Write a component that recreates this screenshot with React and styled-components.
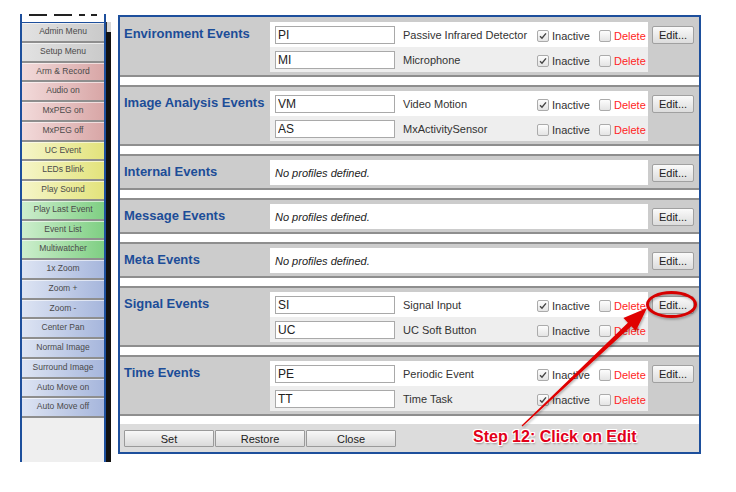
import React from 'react'
import styled, { createGlobalStyle } from 'styled-components'

const GlobalStyle = createGlobalStyle`
  html, body {
    margin: 0;
    padding: 0;
    background: #fff;
  }
  body {
    width: 736px;
    height: 492px;
    overflow: hidden;
    font-family: "Liberation Sans", Arial, sans-serif;
  }
`;

const BLUE = '#1d4f9c';

const Page = styled.div`
  position: relative;
  display: flex;
  align-items: flex-start;
  width: 736px;
  height: 492px;
  padding-left: 20px;
  box-sizing: border-box;
`;

const LeftPanel = styled.div`
  display: flex;
  flex-direction: column;
  margin-top: 14px;
  width: 86px;
  height: 448px;
  box-sizing: border-box;
  border-left: 2px solid ${BLUE};
  border-right: 2px solid ${BLUE};
  background: #efefef;
`;

const TopStrip = styled.div`
  display: flex;
  align-items: flex-start;
  gap: 7px;
  height: 8px;
  padding-left: 7px;
  background: #fff;
  border-bottom: 1px solid ${BLUE};
`;

const StripMark = styled.span`
  width: 18px;
  height: 0;
  border-top: 2px ${p => (p.$dashed ? 'dashed' : 'solid')} #222;
`;

const tones = {
  gray: ['#e2e2e2', '#cacaca'],
  pink: ['#f2dada', '#d8a6a6'],
  yellow: ['#f5f5c8', '#e3e37c'],
  green: ['#cdeecd', '#7fcf83'],
  blue: ['#dde4f3', '#a6b6dc'],
};

const MenuButton = styled.div`
  height: 17.75px;
  line-height: 17.75px;
  border-bottom: 2px solid #8e8e8e;
  background: linear-gradient(to right, ${p => tones[p.$tone][0]}, ${p => tones[p.$tone][1]});
  box-shadow: inset 0 1px 0 rgba(255, 255, 255, 0.6);
  text-align: center;
  font-size: 8.5px;
  color: #4a4a4a;
  white-space: nowrap;
`;

const Splitter = styled.div`
  display: flex;
  flex-direction: column;
  margin-top: 22px;
  width: 5px;
  height: 440px;
  background: #111;
`;

const SplitterCap = styled.div`
  height: 10px;
  background: #d8d8d8;
  border-left: 1px solid #333;
`;

const MainPanel = styled.div`
  margin-top: 15px;
  margin-left: 7px;
  width: 583px;
  box-sizing: border-box;
  border: 2px solid ${BLUE};
  background: #fff;
`;

const Section = styled.div`
  display: flex;
  align-items: flex-start;
  background: #cccccc;
  border-top: 2px solid #8e8e8e;
  border-bottom: 2px solid #8e8e8e;
  padding: 4px 0 3px;
  margin-bottom: 8px;

  &:first-child {
    border-top: none;
    padding-top: 5px;
  }
`;

const Title = styled.div`
  width: 150px;
  box-sizing: border-box;
  padding-left: 4px;
  line-height: 23px;
  font-size: 13px;
  font-weight: bold;
  color: #1c4d98;
  white-space: nowrap;
`;

const Rows = styled.div`
  display: flex;
  flex-direction: column;
  width: 378px;
`;

const Row = styled.div`
  display: flex;
  align-items: center;
  height: 25px;
  padding-left: 5px;
  background: ${p => (p.$alt ? '#eeeeee' : '#ffffff')};
`;

const CodeInput = styled.input`
  width: 120px;
  height: 18px;
  box-sizing: border-box;
  margin: 0 8px 0 0;
  padding: 0 2px;
  border: 1px solid #a9a9a9;
  font-family: "Liberation Sans", Arial, sans-serif;
  font-size: 12px;
  color: #222;
  background: #fff;
  outline: none;
`;

const Name = styled.div`
  width: 134px;
  font-size: 11px;
  color: #333;
  white-space: nowrap;
`;

const CheckGroup = styled.div`
  display: flex;
  align-items: center;
  width: ${p => p.$width || 'auto'};
  margin-top: 3px;
`;

const Box = styled.span`
  display: flex;
  align-items: center;
  justify-content: center;
  width: 10px;
  height: 10px;
  border: 1px solid #ababab;
  border-radius: 2px;
  background: linear-gradient(#fdfdfd, #e4e4e4);
`;

const CheckText = styled.span`
  margin-left: 3px;
  font-size: 11px;
  color: ${p => p.$color || '#333'};
`;

const Empty = styled.div`
  font-size: 11px;
  font-style: italic;
  color: #222;
`;

const EditCol = styled.div`
  padding: 3px 0 0 4px;
`;

const EditButton = styled.button`
  width: 42px;
  height: 18px;
  padding: 0;
  border: 1px solid #a0a0a0;
  border-radius: 2px;
  background: linear-gradient(#fafafa, #dcdcdc);
  font-family: "Liberation Sans", Arial, sans-serif;
  font-size: 11px;
  color: #222;
`;

const BottomBar = styled.div`
  display: flex;
  gap: 1px;
  padding: 6px 4px 5px;
  background: #dcdcdc;
`;

const BarButton = styled.button`
  width: 90px;
  height: 17px;
  padding: 0;
  border: 1px solid #9a9a9a;
  border-radius: 1px;
  background: linear-gradient(#f8f8f8, #dadada);
  font-family: "Liberation Sans", Arial, sans-serif;
  font-size: 11px;
  color: #222;
`;

const Overlay = styled.svg`
  position: absolute;
  left: 0;
  top: 0;
  pointer-events: none;
`;

const StepLabel = styled.div`
  position: absolute;
  left: 473px;
  top: 428px;
  font-size: 16px;
  font-weight: bold;
  color: #e2001a;
  white-space: nowrap;
  text-shadow:
    -1px -1px 0 #fff, 1px -1px 0 #fff, -1px 1px 0 #fff, 1px 1px 0 #fff,
    0 -1px 0 #fff, 0 1px 0 #fff, -1px 0 0 #fff, 1px 0 0 #fff,
    1px 2px 2px rgba(0, 0, 0, 0.35);
`;

const menu = [
  ['Admin Menu', 'gray'], ['Setup Menu', 'gray'],
  ['Arm & Record', 'pink'], ['Audio on', 'pink'], ['MxPEG on', 'pink'], ['MxPEG off', 'pink'],
  ['UC Event', 'yellow'], ['LEDs Blink', 'yellow'], ['Play Sound', 'yellow'],
  ['Play Last Event', 'green'], ['Event List', 'green'], ['Multiwatcher', 'green'],
  ['1x Zoom', 'blue'], ['Zoom +', 'blue'], ['Zoom -', 'blue'], ['Center Pan', 'blue'],
  ['Normal Image', 'blue'], ['Surround Image', 'blue'], ['Auto Move on', 'blue'], ['Auto Move off', 'blue'],
];

const sections = [
  { title: 'Environment Events', rows: [
    { code: 'PI', name: 'Passive Infrared Detector', inactive: true },
    { code: 'MI', name: 'Microphone', inactive: true },
  ] },
  { title: 'Image Analysis Events', rows: [
    { code: 'VM', name: 'Video Motion', inactive: true },
    { code: 'AS', name: 'MxActivitySensor', inactive: false },
  ] },
  { title: 'Internal Events', rows: [] },
  { title: 'Message Events', rows: [] },
  { title: 'Meta Events', rows: [] },
  { title: 'Signal Events', rows: [
    { code: 'SI', name: 'Signal Input', inactive: true },
    { code: 'UC', name: 'UC Soft Button', inactive: false },
  ] },
  { title: 'Time Events', rows: [
    { code: 'PE', name: 'Periodic Event', inactive: true },
    { code: 'TT', name: 'Time Task', inactive: true },
  ] },
];

const Check = ({ checked }) => (
  <Box>
    {checked && (
      <svg width="8" height="8" viewBox="0 0 8 8">
        <path d="M1 4.2 L3 6.2 L7 1.4" fill="none" stroke="#444" strokeWidth="1.4" />
      </svg>
    )}
  </Box>
);

const App = () => {
  return (
    <Page>
      <GlobalStyle />
      <LeftPanel>
        <TopStrip>
          <StripMark />
          <StripMark />
          <StripMark $dashed />
        </TopStrip>
        {menu.map(([label, tone]) => (
          <MenuButton key={label} $tone={tone}>{label}</MenuButton>
        ))}
      </LeftPanel>
      <Splitter><SplitterCap /></Splitter>

      <MainPanel>
        {sections.map(s => (
          <Section key={s.title}>
            <Title>{s.title}</Title>
            <Rows>
              {s.rows.length === 0 && (
                <Row><Empty>No profiles defined.</Empty></Row>
              )}
              {s.rows.map((r, i) => (
                <Row key={r.code} $alt={i % 2 === 1}>
                  <CodeInput readOnly defaultValue={r.code} />
                  <Name>{r.name}</Name>
                  <CheckGroup $width="62px">
                    <Check checked={r.inactive} />
                    <CheckText>Inactive</CheckText>
                  </CheckGroup>
                  <CheckGroup>
                    <Check />
                    <CheckText $color="#ff2424">Delete</CheckText>
                  </CheckGroup>
                </Row>
              ))}
            </Rows>
            <EditCol><EditButton>Edit...</EditButton></EditCol>
          </Section>
        ))}
        <BottomBar>
          <BarButton>Set</BarButton>
          <BarButton>Restore</BarButton>
          <BarButton>Close</BarButton>
        </BottomBar>
      </MainPanel>

      <Overlay width="736" height="492" viewBox="0 0 736 492">
        <defs>
          <filter id="sh" x="-20%" y="-20%" width="140%" height="140%">
            <feDropShadow dx="1" dy="1.5" stdDeviation="1" floodColor="#000" floodOpacity="0.3" />
          </filter>
        </defs>
        <ellipse cx="671.5" cy="304.5" rx="24" ry="12" fill="none" stroke="#d60000" strokeWidth="3" filter="url(#sh)" />
        <polygon
          points="522.4,426.5 631.3,326.3 635.8,331 647,308 623.4,318 627.9,322.7 521.6,425.6"
          fill="#e00000"
          filter="url(#sh)"
        />
      </Overlay>
      <StepLabel>Step 12: Click on Edit</StepLabel>
    </Page>
  )
}

export default App
